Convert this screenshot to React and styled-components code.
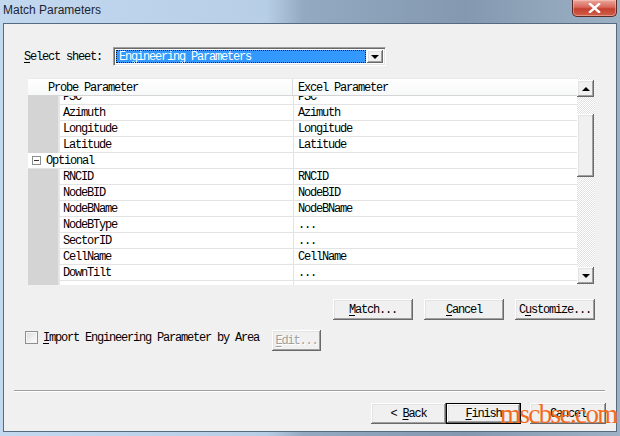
import styled, { createGlobalStyle, css } from 'styled-components';

const GlobalStyle = createGlobalStyle`
  html, body { margin: 0; padding: 0; }
  body { width: 620px; height: 436px; overflow: hidden; background: #8ea3ba; }
  * { box-sizing: border-box; }
`;

const mono = `"Liberation Mono", "DejaVu Sans Mono", monospace`;

const rows = [
  { name: 'PSC', value: 'PSC' },
  { name: 'Azimuth', value: 'Azimuth' },
  { name: 'Longitude', value: 'Longitude' },
  { name: 'Latitude', value: 'Latitude' },
  { group: 'Optional' },
  { name: 'RNCID', value: 'RNCID' },
  { name: 'NodeBID', value: 'NodeBID' },
  { name: 'NodeBName', value: 'NodeBName' },
  { name: 'NodeBType', value: '...' },
  { name: 'SectorID', value: '...' },
  { name: 'CellName', value: 'CellName' },
  { name: 'DownTilt', value: '...' },
];

export default function App() {
  return (
    <Window>
      <GlobalStyle />
      <TitleBar>
        <Title>Match Parameters</Title>
        <CloseButton>
          <svg width="13" height="10" viewBox="0 0 13 10">
            <path d="M2 1 L11 9 M11 1 L2 9" stroke="#fff" strokeWidth="2.4" strokeLinecap="square" />
          </svg>
        </CloseButton>
      </TitleBar>

      <Client>
        <SheetRow>
          <Label><u>S</u>elect sheet:</Label>
          <Combo>
            <ComboValue>Engineering Parameters</ComboValue>
            <ArrowButton $dir="down" />
          </Combo>
        </SheetRow>

        <Grid>
          <GridMain>
            <Header>
              <HeadCell $first>Probe Parameter</HeadCell>
              <HeadCell>Excel Parameter</HeadCell>
            </Header>
            <Body>
              <Rows>
                {rows.map((r, i) =>
                  r.group ? (
                    <GroupRow key={i}>
                      <Toggle>
                        <svg width="9" height="9" viewBox="0 0 9 9">
                          <rect x="0.5" y="0.5" width="8" height="8" fill="#fff" stroke="#8c8c8c" />
                          <path d="M2 4.5 H7" stroke="#333" />
                        </svg>
                      </Toggle>
                      <GroupName>{r.group}</GroupName>
                      <ValueCell />
                    </GroupRow>
                  ) : (
                    <Row key={i}>
                      <Indent />
                      <NameCell>{r.name}</NameCell>
                      <ValueCell>{r.value}</ValueCell>
                    </Row>
                  )
                )}
              </Rows>
            </Body>
          </GridMain>
          <ScrollBar>
            <ArrowButton $dir="up" $scroll />
            <Track>
              <Thumb />
            </Track>
            <ArrowButton $dir="down" $scroll />
          </ScrollBar>
        </Grid>

        <ActionRow>
          <Button $w={80}><u>M</u>atch...</Button>
          <Button $w={80}><u>C</u>ancel</Button>
          <Button $w={80}>C<u>u</u>stomize...</Button>
        </ActionRow>

        <ImportRow>
          <CheckBox />
          <Label><u>I</u>mport Engineering Parameter by Area</Label>
          <Button $w={49} $disabled><u>E</u>dit...</Button>
        </ImportRow>

        <Separator />

        <WizardRow>
          <Button $w={75}>&lt; <u>B</u>ack</Button>
          <Button $w={75} $default><u>F</u>inish</Button>
          <Button $w={76} $gap={9}>Cancel</Button>
        </WizardRow>
      </Client>

      <Watermark>mscbse.com</Watermark>
    </Window>
  );
}

const Window = styled.div`
  position: relative;
  width: 620px;
  height: 436px;
  display: flex;
  flex-direction: column;
  background: linear-gradient(90deg, #c2d8ef 0%, #b7cee7 43%, #93a9c1 49%, #8499b0 75%, #9db1c5 100%);
`;

const TitleBar = styled.div`
  height: 23px;
  display: flex;
  justify-content: space-between;
  align-items: flex-start;
  padding: 0 3px 0 3px;
`;

const Title = styled.span`
  font-family: "Liberation Sans", Arial, sans-serif;
  font-size: 12px;
  line-height: 21px;
  color: #1c2530;
`;

const CloseButton = styled.div`
  width: 45px;
  height: 17px;
  display: flex;
  align-items: center;
  justify-content: center;
  border: 1px solid #5a2a26;
  border-top: none;
  border-radius: 0 0 5px 5px;
  background: linear-gradient(#e9a89c 0%, #d9675a 45%, #c4402f 55%, #d0604a 100%);
  box-shadow: inset 0 0 0 1px rgba(255, 210, 200, 0.45);
`;

const Client = styled.div`
  flex: 1;
  margin: 0 3px 4px 3px;
  border: 1px solid #566a80;
  background: #f0f0f0;
  display: flex;
  flex-direction: column;
  font-family: ${mono};
  font-size: 12px;
  letter-spacing: -1.2px;
  color: #000;
  padding-bottom: 7px;
`;

const SheetRow = styled.div`
  display: flex;
  align-items: center;
  gap: 11px;
  margin: 23px 0 0 20px;
  height: 19px;
`;

const Label = styled.span`
  white-space: pre;
  line-height: 14px;
  u { text-decoration-thickness: 1px; text-underline-offset: 2px; }
`;

const Combo = styled.div`
  width: 273px;
  height: 19px;
  display: flex;
  align-items: stretch;
  background: #fff;
  border-top: 1px solid #a0a0a0;
  border-left: 1px solid #a0a0a0;
  border-right: 1px solid #fff;
  border-bottom: 1px solid #fff;
  box-shadow: inset 1px 1px 0 #696969, inset -1px -1px 0 #e3e3e3;
  padding: 2px 2px 2px 2px;
`;

const ComboValue = styled.div`
  flex: 1;
  background: #3399ff;
  color: #fff;
  outline: 1px dotted #1a1a1a;
  outline-offset: -1px;
  padding-left: 3px;
  line-height: 15px;
  margin-right: 1px;
`;

const raised = css`
  background: #f0f0f0;
  box-shadow: inset -1px -1px 0 #696969, inset 1px 1px 0 #ffffff, inset -2px -2px 0 #a0a0a0, inset 2px 2px 0 #e3e3e3;
`;

const ArrowButton = styled.div`
  ${raised};
  width: ${p => (p.$scroll ? 17 : 16)}px;
  height: ${p => (p.$scroll ? '17px' : 'auto')};
  flex-shrink: 0;
  position: relative;
  &::after {
    content: '';
    position: absolute;
    left: 50%;
    top: 50%;
    transform: translate(-50%, -50%);
    border-left: 4px solid transparent;
    border-right: 4px solid transparent;
    ${p => (p.$dir === 'up' ? 'border-bottom: 4px solid #000;' : 'border-top: 4px solid #000;')}
  }
`;

const Grid = styled.div`
  display: flex;
  width: 567px;
  height: 207px;
  margin: 12px 0 0 24px;
  background: #fff;
`;

const GridMain = styled.div`
  flex: 1;
  display: flex;
  flex-direction: column;
  min-width: 0;
`;

const Header = styled.div`
  display: flex;
  height: 18px;
  background: linear-gradient(#ffffff, #f7f8f9);
  border-top: 1px solid #eaeaea;
  border-bottom: 1px solid #d5d5d5;
  position: relative;
  z-index: 1;
`;

const HeadCell = styled.div`
  width: ${p => (p.$first ? '265px' : 'auto')};
  flex: ${p => (p.$first ? 'none' : '1')};
  padding-left: ${p => (p.$first ? '20px' : '5px')};
  border-right: ${p => (p.$first ? '1px solid #dcdcdc' : 'none')};
  line-height: 18px;
`;

const Body = styled.div`
  flex: 1;
  overflow: hidden;
  background: linear-gradient(90deg, #d4d4d4 0 30px, #e6e6e6 30px 32px, #fff 32px 265px, #e3e3e3 265px 266px, #fff 266px);
`;

/* scrolled down a few pixels, as in the picture */
const Rows = styled.div`
  margin-top: -7px;
`;

const rowBase = css`
  display: flex;
  height: 16px;
  line-height: 15px;
  padding-top: 0;
`;

const Row = styled.div`
  ${rowBase};
`;

const Indent = styled.div`
  width: 32px;
  flex-shrink: 0;
`;

const NameCell = styled.div`
  width: 233px;
  padding: 1px 0 0 3px;
  border-bottom: 1px solid #e3e3e3;
  background: #fff;
`;

const ValueCell = styled.div`
  flex: 1;
  padding: 1px 0 0 4px;
  border-left: 1px solid #e3e3e3;
  border-bottom: 1px solid #e3e3e3;
  background: #fff;
  color: #000;
`;

const GroupRow = styled.div`
  ${rowBase};
  background: #fff;
`;

const Toggle = styled.div`
  width: 18px;
  padding-left: 4px;
  display: flex;
  align-items: center;
  border-bottom: 1px solid #e3e3e3;
`;

const GroupName = styled.div`
  width: 247px;
  padding-top: 1px;
  border-bottom: 1px solid #e3e3e3;
`;

const ScrollBar = styled.div`
  width: 18px;
  display: flex;
  flex-direction: column;
  padding: 2px 1px 1px 0;
  background: repeating-conic-gradient(#ffffff 0 25%, #e2e2e2 0 50%) 0 0 / 2px 2px;
`;

const Track = styled.div`
  flex: 1;
  padding-top: 17px;
`;

const Thumb = styled.div`
  ${raised};
  height: 63px;
`;

const ActionRow = styled.div`
  display: flex;
  justify-content: flex-end;
  gap: 11px;
  margin-top: 14px;
  padding-right: 21px;
`;

const Button = styled.div`
  ${raised};
  width: ${p => p.$w}px;
  height: 21px;
  display: flex;
  align-items: center;
  justify-content: center;
  white-space: pre;
  margin-left: ${p => p.$gap || 0}px;
  ${p => p.$disabled && css`
    color: #a0a0a0;
    text-shadow: 1px 1px 0 #fff;
  `}
  ${p => p.$default && css`
    box-shadow: inset 0 0 0 1px #000, inset -2px -2px 0 #696969, inset 2px 2px 0 #ffffff, inset -3px -3px 0 #a0a0a0, inset 3px 3px 0 #e3e3e3;
  `}
  u { text-decoration-thickness: 1px; text-underline-offset: 2px; }
`;

const ImportRow = styled.div`
  display: flex;
  align-items: flex-start;
  height: 21px;
  margin: 10px 0 0 21px;
  ${Label} { margin: 1px 13px 0 5px; }
`;

const CheckBox = styled.div`
  width: 13px;
  height: 13px;
  margin-top: 1px;
  border: 1px solid #8e8f8f;
  background: linear-gradient(135deg, #dcdcdc, #ffffff);
  box-shadow: inset 0 0 0 1px #f4f4f4;
`;

const Separator = styled.div`
  margin: 39px 11px 0 10px;
  height: 2px;
  border-top: 1px solid #a0a0a0;
  border-bottom: 1px solid #ffffff;
`;

const WizardRow = styled.div`
  display: flex;
  justify-content: flex-end;
  margin-top: 11px;
  padding-right: 10px;
`;

const Watermark = styled.div`
  position: absolute;
  left: 500px;
  top: 401px;
  font-family: "Liberation Serif", "Times New Roman", serif;
  font-size: 27px;
  letter-spacing: -1.6px;
  line-height: 1;
  color: #f26a1c;
  pointer-events: none;
`;
